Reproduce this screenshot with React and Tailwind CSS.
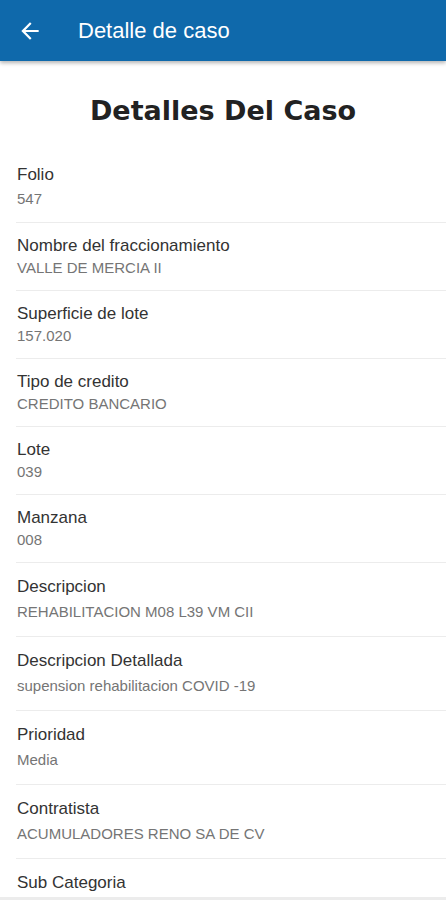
import React from 'react';

const rows = [
  { label: 'Folio', value: '547', kind: 'first' },
  { label: 'Nombre del fraccionamiento', value: 'VALLE DE MERCIA II', kind: 'compact' },
  { label: 'Superficie de lote', value: '157.020', kind: 'compact' },
  { label: 'Tipo de credito', value: 'CREDITO BANCARIO', kind: 'compact' },
  { label: 'Lote', value: '039', kind: 'compact' },
  { label: 'Manzana', value: '008', kind: 'compact' },
  { label: 'Descripcion', value: 'REHABILITACION M08 L39 VM CII', kind: 'tall' },
  { label: 'Descripcion Detallada', value: 'supension rehabilitacion COVID -19', kind: 'tall' },
  { label: 'Prioridad', value: 'Media', kind: 'tall' },
  { label: 'Contratista', value: 'ACUMULADORES RENO SA DE CV', kind: 'tall' },
  { label: 'Sub Categoria', value: '', kind: 'tall' },
];

const rowCls = {
  first: 'ml-4 pl-[1px] pt-[13px] pb-[14px] border-b border-[#ececec]',
  compact: 'ml-4 pl-[1px] pt-[13px] pb-[13px] border-b border-[#ececec]',
  tall: 'ml-4 pl-[1px] pt-[14px] pb-[15px] border-b border-[#ececec]',
};

const valueCls = {
  first: 'mt-[5px] text-[15px] leading-[18px] text-[#757575]',
  compact: 'mt-[3px] text-[15px] leading-[18px] text-[#757575]',
  tall: 'mt-[6px] text-[15px] leading-[18px] text-[#757575]',
};

function Row({ label, value, kind }) {
  return (
    <div className={rowCls[kind]}>
      <div className="text-[17px] leading-5 text-[#333333]">{label}</div>
      <div className={valueCls[kind]}>{value}</div>
    </div>
  );
}

export default function App() {
  return (
    <div className="h-[900px] w-full flex flex-col overflow-hidden bg-white font-['Liberation_Sans',Arial,sans-serif]">
      <header className="h-[61px] shrink-0 bg-[#0f69ab] flex items-center shadow-[0_2px_4px_rgba(0,0,0,0.3)] z-10">
        <svg width="26" height="26" viewBox="0 0 24 24" className="ml-[17px] mt-[1px]" fill="#ffffff">
          <path d="M20 11H7.83l5.59-5.59L12 4l-8 8 8 8 1.41-1.41L7.83 13H20v-2z" />
        </svg>
        <h1 className="ml-[35px] text-[22px] text-white leading-none">Detalle de caso</h1>
      </header>
      <main className="flex-1 overflow-hidden">
        <h2 className="mt-[34px] mb-[25px] text-center text-[27px] leading-8 font-bold text-[#222222] font-['DejaVu_Sans',Verdana,sans-serif]">
          Detalles Del Caso
        </h2>
        {rows.map((r) => (
          <Row key={r.label} {...r} />
        ))}
      </main>
      <div className="h-[3px] shrink-0 bg-[#ececec]" />
    </div>
  );
}
